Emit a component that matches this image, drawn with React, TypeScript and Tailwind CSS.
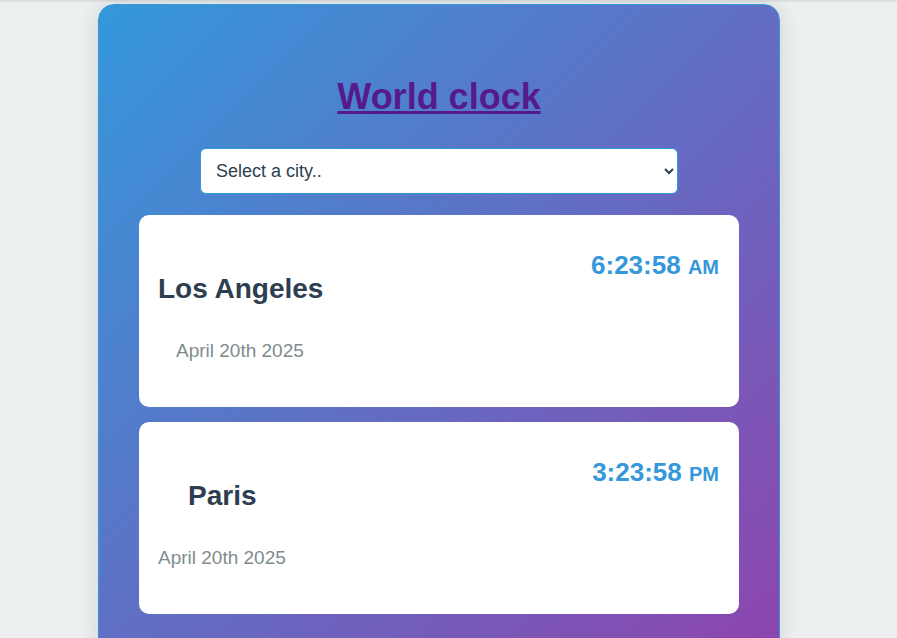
const cities = [
  {
    name: "Los Angeles",
    date: "April 20th 2025",
    time: "6:23:58",
    period: "AM",
    nameClass: "pl-0",
    dateClass: "pl-[18px]",
  },
  {
    name: "Paris",
    date: "April 20th 2025",
    time: "3:23:58",
    period: "PM",
    nameClass: "pl-[30px]",
    dateClass: "pl-0",
  },
];

export default function App() {
  return (
    <div className="min-h-screen bg-[#ecf0f1] font-['Liberation_Sans',Arial,sans-serif]">
      <div className="h-[2px] bg-[#dde1e2]"></div>
      <div className="ml-[98px] mt-[2px] w-[682px] rounded-[16px] border border-[#3498db] bg-[linear-gradient(135deg,#3498db,#8e44ad)] px-[40px] pt-[74px] pb-[40px] shadow-[0_0_22px_rgba(0,0,0,0.12)]">
        <h1 className="text-center text-[36px] leading-[36px] font-bold">
          <a href="#" className="text-[#551a8b] underline">
            World clock
          </a>
        </h1>

        <div className="mt-[33px] flex justify-center">
          <select className="h-[46px] w-[478px] rounded-[6px] border border-[#3498db] bg-white pl-[11px] pr-[6px] text-[18px] text-[#2c3e50]">
            <option>Select a city..</option>
            <option>Los Angeles</option>
            <option>Paris</option>
            <option>Tokyo</option>
          </select>
        </div>

        <div className="mt-[21px] flex flex-col gap-[15px]">
          {cities.map((city) => (
            <div
              key={city.name}
              className="flex h-[192px] justify-between rounded-[10px] bg-white pl-[19px] pr-[20px] pt-[37px]"
            >
              <div className="flex flex-col">
                <h2 className={`mt-[23px] text-[28px] leading-[28px] font-bold text-[#2c3e50] ${city.nameClass}`}>
                  {city.name}
                </h2>
                <div className={`mt-[38px] text-[19px] leading-[19px] text-[#7f8c8d] ${city.dateClass}`}>
                  {city.date}
                </div>
              </div>
              <div className="text-[26px] leading-[26px] font-bold text-[#3498db]">
                {city.time} <span className="text-[20px]">{city.period}</span>
              </div>
            </div>
          ))}
        </div>
      </div>
    </div>
  );
}
